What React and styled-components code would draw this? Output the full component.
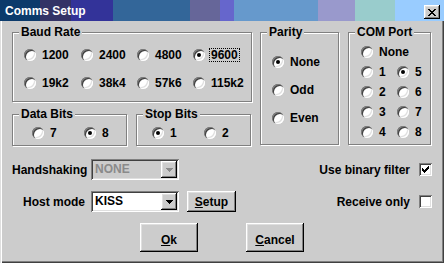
import React from 'react'
import styled, { createGlobalStyle } from 'styled-components'

const GlobalStyle = createGlobalStyle`
  html, body {
    margin: 0;
    padding: 0;
    background: #cccccc;
  }
  body {
    font-family: "Liberation Sans", Arial, sans-serif;
    font-size: 12px;
    font-weight: bold;
    color: #000;
  }
`

const raised = `
  box-shadow: inset -1px -1px 0 #000, inset 1px 1px 0 #fff,
    inset -2px -2px 0 #808080, inset 2px 2px 0 #dfdfdf;
`
const sunken = `
  box-shadow: inset 1px 1px 0 #808080, inset -1px -1px 0 #fff,
    inset 2px 2px 0 #404040, inset -2px -2px 0 #dfdfdf;
`

const Window = styled.div`
  width: 444px;
  height: 263px;
  box-sizing: border-box;
  background: #cccccc;
  display: flex;
  flex-direction: column;
  box-shadow: inset 1px 0 0 #dfdfdf, inset 2px 0 0 #fff,
    inset -1px -1px 0 #404040, inset -2px -2px 0 #808080;
`

const TitleBar = styled.div`
  height: 21px;
  flex: none;
  display: flex;
  justify-content: space-between;
  padding: 0 4px 0 5px;
  box-sizing: border-box;
  color: #fff;
  background: linear-gradient(to right,
    #0b3a6b 0 40px, #333366 40px 71px, #333399 71px 113px,
    #336699 113px 190px, #666699 190px 220px, #6666cc 220px 234px,
    #6699cc 234px 318px, #9999cc 318px 355px, #99cccc 355px 395px,
    #99ccff 395px);
`

const Title = styled.span`
  line-height: 14px;
  padding-top: 4px;
`

const CloseButton = styled.span`
  width: 16px;
  height: 14px;
  margin-top: 5px;
  box-sizing: border-box;
  background: #cccccc;
  display: flex;
  align-items: center;
  justify-content: center;
  ${raised}
`

const Body = styled.div`
  flex: 1;
  display: flex;
  flex-direction: column;
  padding: 11px 12px 0 12px;
`

const TopRow = styled.div`
  display: flex;
  align-items: flex-start;
`

const LeftCol = styled.div`
  width: 240px;
  display: flex;
  flex-direction: column;
  gap: 12px;
`

const BitsRow = styled.div`
  display: flex;
  gap: 9px;
`

const Group = styled.div`
  box-sizing: border-box;
  width: ${p => p.$w}px;
  height: ${p => p.$h}px;
  margin-left: ${p => p.$ml || 0}px;
  border: 1px solid #808080;
  box-shadow: 1px 1px 0 #fff, inset 1px 1px 0 #fff;
`

const Caption = styled.div`
  width: fit-content;
  margin: -7px 0 0 6px;
  padding: 0 2px;
  line-height: 13px;
  background: #cccccc;
  white-space: nowrap;
`

const RadioGrid = styled.div`
  display: grid;
  grid-template-columns: ${p => p.$cols};
  grid-auto-rows: ${p => p.$row}px;
  align-items: center;
  padding: ${p => p.$pt}px 0 0 ${p => p.$pl}px;
`

const RadioItem = styled.div`
  display: flex;
  align-items: center;
  gap: 4px;
  white-space: nowrap;
  grid-column: span ${p => p.$span || 1};
`

const RadioDot = styled.span`
  position: relative;
  flex: none;
  width: 12px;
  height: 12px;
  border-radius: 50%;
  background: #fff;
  box-shadow: inset 1px 1px 0 #808080, inset 2px 2px 0 #404040,
    inset -1px -1px 0 #fff, inset -2px -2px 0 #dfdfdf;
  &::after {
    content: '';
    display: ${p => (p.$checked ? 'block' : 'none')};
    position: absolute;
    left: 4px;
    top: 4px;
    width: 4px;
    height: 4px;
    border-radius: 50%;
    background: #000;
  }
`

const RadioLabel = styled.span`
  line-height: 12px;
  padding: 0 1px;
  border: 1px ${p => (p.$focused ? 'dotted #000' : 'solid transparent')};
`

const FormRow = styled.div`
  display: grid;
  grid-template-columns: 73px 88px 49px 1fr;
  column-gap: 6px;
  height: 21px;
  align-items: center;
  margin-top: ${p => p.$mt}px;
`

const FieldLabel = styled.span`
  text-align: right;
  white-space: nowrap;
`

const Select = styled.div`
  height: 21px;
  box-sizing: border-box;
  padding: 2px;
  display: flex;
  background: ${p => (p.$disabled ? '#cccccc' : '#fff')};
  color: ${p => (p.$disabled ? '#8a8a8a' : '#000')};
  ${sunken}
`

const SelectText = styled.span`
  flex: 1;
  padding-left: 2px;
  line-height: 17px;
`

const SelectArrow = styled.span`
  width: 16px;
  height: 17px;
  box-sizing: border-box;
  background: #cccccc;
  display: flex;
  align-items: center;
  justify-content: center;
  ${raised}
`

const Button = styled.div`
  width: ${p => p.$w}px;
  height: ${p => p.$h}px;
  box-sizing: border-box;
  margin-left: ${p => p.$ml || 0}px;
  padding-top: ${p => p.$pt || 0}px;
  display: flex;
  align-items: center;
  justify-content: center;
  background: #cccccc;
  ${raised}
`

const CheckField = styled.div`
  display: flex;
  justify-content: flex-end;
  align-items: center;
  gap: 9px;
  white-space: nowrap;
`

const CheckBox = styled.span`
  width: 13px;
  height: 13px;
  box-sizing: border-box;
  background: #fff;
  display: flex;
  align-items: center;
  justify-content: center;
  ${sunken}
`

const ButtonRow = styled.div`
  display: flex;
  justify-content: center;
  gap: 48px;
  margin-top: 11px;
`

const Radio = ({ label, checked, focused, span }) => (
  <RadioItem $span={span}>
    <RadioDot $checked={checked} />
    <RadioLabel $focused={focused}>{label}</RadioLabel>
  </RadioItem>
)

const Arrow = ({ color }) => (
  <svg width="7" height="4" viewBox="0 0 7 4" fill={color}>
    <path d="M0 0h7v1H0zM1 1h5v1H1zM2 2h3v1H2zM3 3h1v1H3z" />
  </svg>
)

const CheckMark = () => (
  <svg width="7" height="7" viewBox="0 0 7 7" fill="#000">
    <path d="M6 0h1v1H6zM5 1h2v1H5zM0 2h1v1H0zM4 2h3v1H4zM0 3h2v1H0zM3 3h3v1H3zM0 4h5v1H0zM1 5h3v1H1zM2 6h1v1H2z" />
  </svg>
)

const CloseGlyph = () => (
  <svg width="8" height="7" viewBox="0 0 8 7" fill="#000">
    <path d="M0 0h2v1H0zM6 0h2v1H6zM1 1h2v1H1zM5 1h2v1H5zM2 2h4v1H2zM3 3h2v1H3zM2 4h4v1H2zM1 5h2v1H1zM5 5h2v1H5zM0 6h2v1H0zM6 6h2v1H6z" />
  </svg>
)

const baud = ['1200', '2400', '4800', '9600', '19k2', '38k4', '57k6', '115k2']

export default function App() {
  return (
    <>
      <GlobalStyle />
      <Window>
        <TitleBar>
          <Title>Comms Setup</Title>
          <CloseButton><CloseGlyph /></CloseButton>
        </TitleBar>
        <Body>
          <TopRow>
            <LeftCol>
              <Group $w={240} $h={70}>
                <Caption>Baud Rate</Caption>
                <RadioGrid $cols="57px 56px 56px auto" $row={28} $pt={2} $pl={11}>
                  {baud.map(b => (
                    <Radio key={b} label={b} checked={b === '9600'} focused={b === '9600'} />
                  ))}
                </RadioGrid>
              </Group>
              <BitsRow>
                <Group $w={115} $h={32}>
                  <Caption>Data Bits</Caption>
                  <RadioGrid $cols="52px auto" $row={20} $pt={2} $pl={19}>
                    <Radio label="7" />
                    <Radio label="8" checked />
                  </RadioGrid>
                </Group>
                <Group $w={115} $h={32}>
                  <Caption>Stop Bits</Caption>
                  <RadioGrid $cols="52px auto" $row={20} $pt={2} $pl={15}>
                    <Radio label="1" checked />
                    <Radio label="2" />
                  </RadioGrid>
                </Group>
              </BitsRow>
            </LeftCol>
            <Group $w={79} $h={113} $ml={8}>
              <Caption>Parity</Caption>
              <RadioGrid $cols="auto" $row={28} $pt={9} $pl={11}>
                <Radio label="None" checked />
                <Radio label="Odd" />
                <Radio label="Even" />
              </RadioGrid>
            </Group>
            <Group $w={83} $h={113} $ml={9}>
              <Caption>COM Port</Caption>
              <RadioGrid $cols="36px auto" $row={20} $pt={3} $pl={12}>
                <Radio label="None" span={2} />
                <Radio label="1" />
                <Radio label="5" checked />
                <Radio label="2" />
                <Radio label="6" />
                <Radio label="3" />
                <Radio label="7" />
                <Radio label="4" />
                <Radio label="8" />
              </RadioGrid>
            </Group>
          </TopRow>

          <FormRow $mt={13}>
            <FieldLabel>Handshaking</FieldLabel>
            <Select $disabled>
              <SelectText>NONE</SelectText>
              <SelectArrow><Arrow color="#8a8a8a" /></SelectArrow>
            </Select>
            <span />
            <CheckField>
              Use binary filter
              <CheckBox><CheckMark /></CheckBox>
            </CheckField>
          </FormRow>

          <FormRow $mt={11}>
            <FieldLabel>Host mode</FieldLabel>
            <Select>
              <SelectText>KISS</SelectText>
              <SelectArrow><Arrow color="#000" /></SelectArrow>
            </Select>
            <Button $w={49} $h={21} $ml={2}><span><u>S</u>etup</span></Button>
            <CheckField>
              Receive only
              <CheckBox />
            </CheckField>
          </FormRow>

          <ButtonRow>
            <Button $w={58} $h={29} $pt={4}><span><u>O</u>k</span></Button>
            <Button $w={58} $h={29} $pt={4}><span><u>C</u>ancel</span></Button>
          </ButtonRow>
        </Body>
      </Window>
    </>
  )
}
